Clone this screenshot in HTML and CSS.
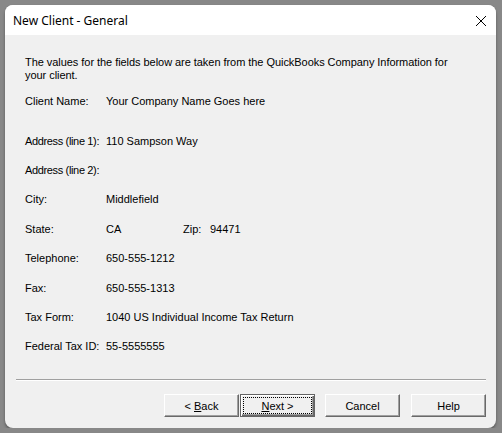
FILE: index.html
```html
<!DOCTYPE html>
<html lang="en">
<head>
  <meta charset="UTF-8">
  <meta name="viewport" content="width=device-width, initial-scale=1.0">
  <title>New Client - General</title>
  <link rel="stylesheet" href="styles.css">
</head>
<body>
  <div class="window">
    <div class="titlebar">
      <span class="title">New Client - General</span>
      <svg class="close" width="12" height="12" viewBox="0 0 12 12">
        <path d="M1 1 L11 11 M11 1 L1 11" stroke="#000" stroke-width="1" fill="none"/>
      </svg>
    </div>

    <div class="content">
      <p class="intro">The values for the fields below are taken from the QuickBooks Company Information for your client.</p>

      <div class="row client">
        <span class="label">Client Name:</span>
        <span class="value">Your Company Name Goes here</span>
      </div>

      <div class="fields">
        <div class="row">
          <span class="label tight">Address (line 1):</span>
          <span class="value">110 Sampson Way</span>
        </div>
        <div class="row">
          <span class="label tight">Address (line 2):</span>
          <span class="value"></span>
        </div>
        <div class="row">
          <span class="label">City:</span>
          <span class="value">Middlefield</span>
        </div>
        <div class="row">
          <span class="label">State:</span>
          <span class="value state">CA</span>
          <span class="zip-label">Zip:</span>
          <span class="value">94471</span>
        </div>
        <div class="row">
          <span class="label">Telephone:</span>
          <span class="value">650-555-1212</span>
        </div>
        <div class="row">
          <span class="label">Fax:</span>
          <span class="value">650-555-1313</span>
        </div>
        <div class="row">
          <span class="label">Tax Form:</span>
          <span class="value">1040 US Individual Income Tax Return</span>
        </div>
        <div class="row">
          <span class="label">Federal Tax ID:</span>
          <span class="value">55-5555555</span>
        </div>
      </div>
    </div>

    <div class="footer">
      <div class="separator"></div>
      <div class="buttons">
        <button class="btn">&lt; <u>B</u>ack</button>
        <button class="btn default"><u>N</u>ext &gt;</button>
        <button class="btn gap">Cancel</button>
        <button class="btn gap-help">Help</button>
      </div>
    </div>
  </div>
</body>
</html>
```

FILE: styles.css
```css
* {
  margin: 0;
  padding: 0;
  box-sizing: border-box;
}

body {
  background-color: #888888;
  font-family: "Liberation Sans", Arial, sans-serif;
  font-size: 11px;
  color: #000;
}

.window {
  margin: 5px 0 0 5px;
  width: 491px;
  height: 423px;
  background-color: #f0f0f0;
  border-radius: 8px;
  overflow: hidden;
  box-shadow: 0 2px 3px rgba(0, 0, 0, 0.35);
  display: flex;
  flex-direction: column;
}

.titlebar {
  height: 30px;
  background-color: #fff;
  display: flex;
  align-items: center;
  justify-content: space-between;
  padding: 0 9px 0 8px;
}

.title {
  font-family: "Noto Sans", "Segoe UI", sans-serif;
  font-size: 12px;
  padding-top: 1px;
}

.close {
  margin-top: 2px;
}

.content {
  flex: 1;
  padding: 21px 20px 0 20px;
}

.intro {
  line-height: 13px;
  width: 430px;
  margin-bottom: 4px;
  letter-spacing: -0.05px;
}

.row {
  display: flex;
  align-items: center;
  height: 29.4px;
}

.row.client {
  height: 29px;
  margin-bottom: 11px;
}

.label {
  width: 81px;
  flex-shrink: 0;
}

.label.tight {
  letter-spacing: -0.35px;
}

.state {
  width: 77px;
}

.zip-label {
  width: 27px;
}

.footer {
  padding: 0 10px 11px 11px;
}

.separator {
  border-top: 1px solid #a0a0a0;
  border-bottom: 1px solid #fff;
  margin-bottom: 13px;
}

.buttons {
  display: flex;
  justify-content: flex-end;
}

.btn {
  position: relative;
  width: 75px;
  height: 23px;
  font-family: "Liberation Sans", Arial, sans-serif;
  font-size: 11px;
  color: #000;
  background-color: #f0f0f0;
  border: 1px solid;
  border-color: #fff #696969 #696969 #fff;
  box-shadow: inset -1px -1px #a0a0a0;
}

.btn.default {
  margin-left: 1px;
  border-color: #646464;
  box-shadow: inset 1px 1px #fff, inset -1px -1px #696969, inset -2px -2px #a0a0a0;
}

.btn.default::after {
  content: "";
  position: absolute;
  top: 2px;
  left: 2px;
  right: 2px;
  bottom: 2px;
  border: 1px dotted #000;
}

.btn.gap {
  margin-left: 10px;
}

.btn.gap-help {
  margin-left: 11px;
}
```
